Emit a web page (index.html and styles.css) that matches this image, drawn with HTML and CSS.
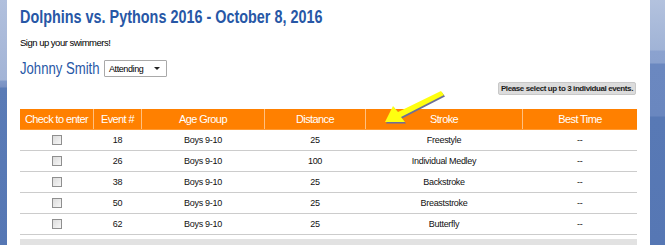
FILE: index.html
```html
<!DOCTYPE html>
<html>
<head>
<meta charset="utf-8">
<link rel="stylesheet" href="styles.css">
</head>
<body>
<div class="frame">
  <div class="strip strip-left"></div>
  <div class="page">
    <h1 class="title"><span class="squeeze">Dolphins vs. Pythons 2016 - October 8, 2016</span></h1>
    <p class="intro">Sign up your swimmers!</p>
    <div class="swimmer">
      <span class="name">Johnny Smith</span>
      <span class="select">Attending<span class="caret"></span></span>
    </div>
    <div class="notice-row">
      <span class="notice">Please select up to 3 individual events.</span>
    </div>
    <div class="table-wrap">
      <table class="events">
        <thead>
          <tr>
            <th class="c1">Check to enter</th>
            <th class="c2">Event #</th>
            <th class="c3">Age Group</th>
            <th class="c4">Distance</th>
            <th class="c5">Stroke</th>
            <th class="c6">Best Time</th>
          </tr>
        </thead>
        <tbody>
          <tr><td><span class="cb"></span></td><td>18</td><td>Boys 9-10</td><td>25</td><td>Freestyle</td><td>--</td></tr>
          <tr><td><span class="cb"></span></td><td>26</td><td>Boys 9-10</td><td>100</td><td>Individual Medley</td><td>--</td></tr>
          <tr><td><span class="cb"></span></td><td>38</td><td>Boys 9-10</td><td>25</td><td>Backstroke</td><td>--</td></tr>
          <tr><td><span class="cb"></span></td><td>50</td><td>Boys 9-10</td><td>25</td><td>Breaststroke</td><td>--</td></tr>
          <tr><td><span class="cb"></span></td><td>62</td><td>Boys 9-10</td><td>25</td><td>Butterfly</td><td>--</td></tr>
        </tbody>
      </table>
      <svg class="arrow" width="70" height="40" viewBox="0 0 70 40">
        <polygon points="62,2 65,6 22,28 26,33 6,33 14,17 19,23" fill="#6b6f9a" transform="translate(1,1.5)"/>
        <polygon points="62,2 65,6 22,28 26,33 6,33 14,17 19,23" fill="#ffff10"/>
      </svg>
    </div>
    <div class="footer-bar"></div>
  </div>
  <div class="strip strip-right"></div>
</div>
</body>
</html>
```
FILE: styles.css
```css
html, body {
  margin: 0;
  padding: 0;
  background: #fff;
  font-family: "Liberation Sans", Arial, sans-serif;
}
.frame {
  display: flex;
  width: 665px;
  height: 245px;
  overflow: hidden;
}
.strip {
  flex: none;
}
.strip-left {
  width: 7px;
  background: linear-gradient(to bottom, #b1c0dd 0, #a3b4d6 80px, #8099c8 81px, #7890c2 87px, #5a7bb6 88px, #5677b4 245px);
}
.strip-right {
  width: 15px;
  margin-left: auto;
  background: linear-gradient(to bottom, #b3c2de 0, #a0b3d6 50px, #8ba2cf 51px, #8aa1ce 63px, #6b88c0 64px, #6a87bf 116px, #5879b5 117px, #5677b4 245px);
}
.page {
  width: 617px;
  padding: 0 13px;
  background: #fff;
}
.title {
  margin: 7px 0 0;
  font-size: 18px;
  line-height: 21px;
  font-weight: bold;
  color: #2757a6;
  white-space: nowrap;
}
.squeeze {
  display: inline-block;
  transform: scaleX(0.8);
  transform-origin: left center;
}
.intro {
  margin: 9px 0 0;
  font-size: 9.5px;
  letter-spacing: -0.5px;
  line-height: 11px;
  color: #000;
}
.swimmer {
  display: flex;
  align-items: center;
  margin-top: 12px;
  height: 17px;
}
.name {
  display: inline-block;
  font-size: 16px;
  color: #2757a6;
  line-height: 17px;
  transform: scaleX(0.82);
  transform-origin: left center;
  margin-right: -17px;
  white-space: nowrap;
}
.select {
  position: relative;
  display: flex;
  align-items: center;
  margin-left: 4px;
  width: 57px;
  height: 15px;
  border: 1px solid #a9a9a9;
  border-radius: 1px;
  box-sizing: content-box;
  font-size: 9px;
  letter-spacing: -0.4px;
  padding-left: 4px;
  color: #000;
  background: #fff;
}
.caret {
  position: absolute;
  right: 6px;
  top: 6px;
  width: 0;
  height: 0;
  border-left: 3px solid transparent;
  border-right: 3px solid transparent;
  border-top: 3px solid #222;
}
.notice-row {
  display: flex;
  justify-content: flex-end;
  margin-top: 5px;
  padding-right: 1px;
}
.notice {
  display: inline-block;
  background: #dcdcdc;
  border: 1px solid #c8c8c8;
  border-radius: 2px;
  padding: 0 2px;
  font-size: 8px;
  letter-spacing: -0.4px;
  line-height: 11px;
  font-weight: bold;
  color: #1a1a1a;
}
.table-wrap {
  position: relative;
  margin-top: 14px;
}
.events {
  width: 617px;
  border-collapse: collapse;
  table-layout: fixed;
}
.events th {
  background: #ff8000;
  color: #fff;
  font-weight: normal;
  font-size: 11px;
  letter-spacing: -0.6px;
  white-space: nowrap;
  height: 20px;
  padding: 0;
  border-left: 1px solid #ffc080;
  border-bottom: 1px solid #ff9a33;
  text-align: center;
}
.events th:first-child {
  border-left: none;
}
.c1 { width: 73px; }
.c2 { width: 47px; }
.c3 { width: 122px; }
.c4 { width: 100px; }
.c5 { width: 156px; }
.events td {
  height: 20px;
  padding: 0;
  text-align: center;
  font-size: 9px;
  letter-spacing: -0.3px;
  color: #111;
  border-bottom: 1px solid #cccccc;
}
.cb {
  display: inline-block;
  width: 8px;
  height: 8px;
  border: 1px solid #8f8f8f;
  background: linear-gradient(135deg, #dcdcdc, #f6f6f6);
  vertical-align: middle;
}
.arrow {
  position: absolute;
  left: 359px;
  top: -20px;
}
.footer-bar {
  margin-top: 4px;
  height: 10px;
  background: #e2e2e2;
}
```
